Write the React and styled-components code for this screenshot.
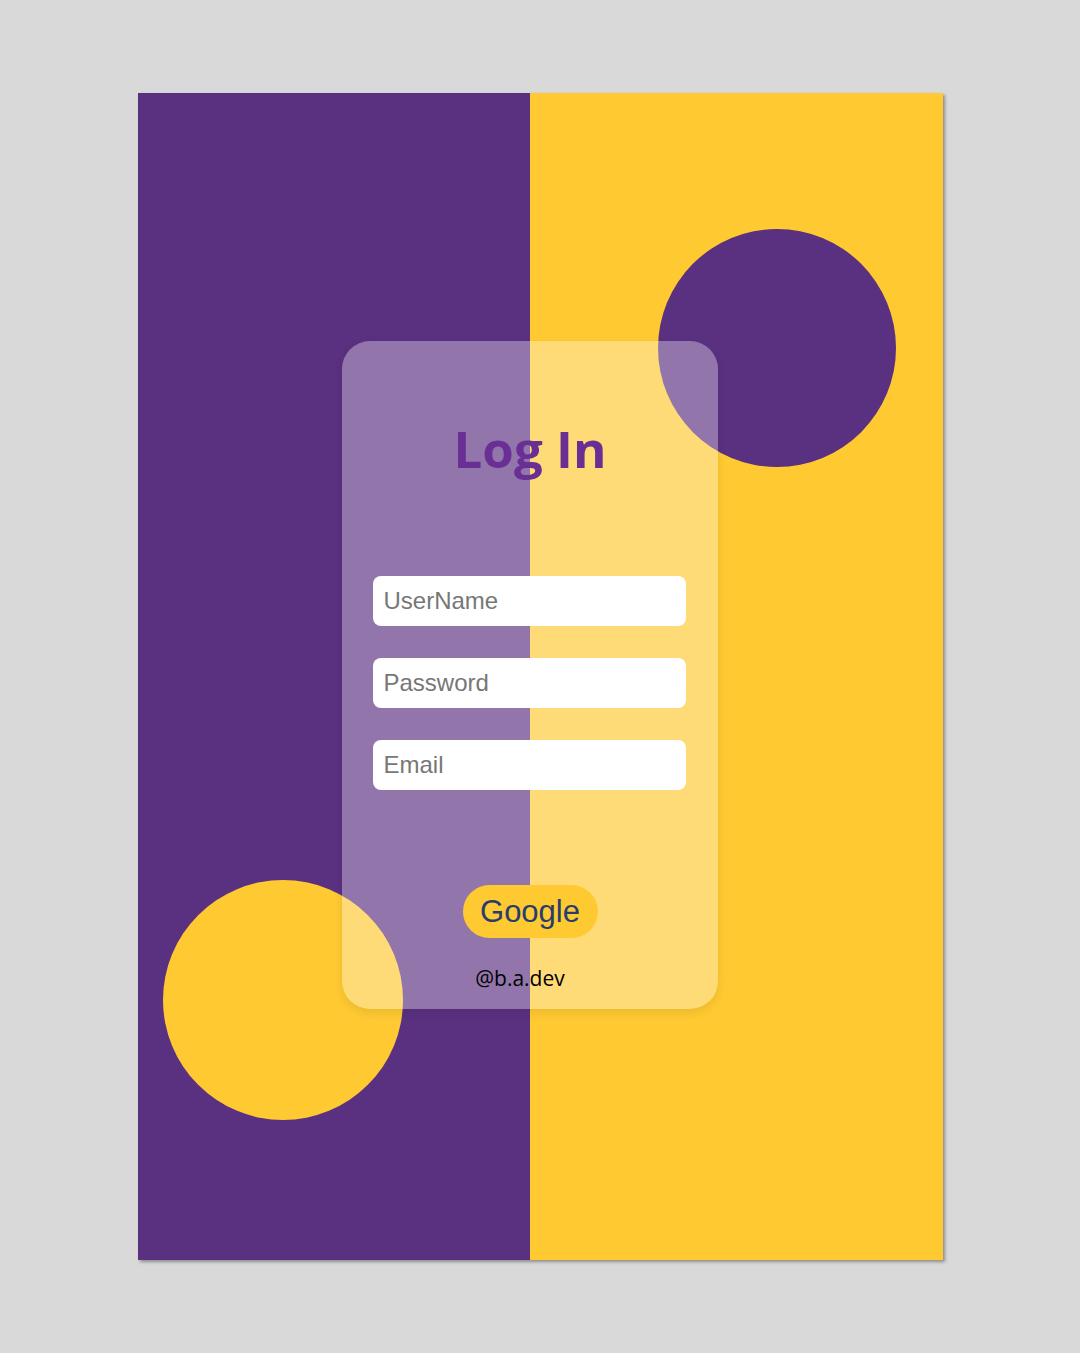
import React from 'react';
import styled, { createGlobalStyle } from 'styled-components';

const GlobalStyle = createGlobalStyle`
    html, body {
        margin: 0;
        padding: 0;
        background: #d9d9d9;
    }
`;

const Page = styled.div`
    width: 1080px;
    height: 1353px;
    padding: 93px 0 0 138px;
    box-sizing: border-box;
`;

const Poster = styled.div`
    position: relative;
    display: flex;
    width: 805px;
    height: 1167px;
    overflow: hidden;
    box-shadow: 2px 2px 3px rgba(0, 0, 0, 0.35);
`;

const Half = styled.div`
    flex: ${(p) => (p.$grow ? 1 : '0 0 392px')};
    background: ${(p) => p.$color};
`;

// 원 장식 (포스터 위 자유 배치)
const Circle = styled.div`
    position: absolute;
    left: ${(p) => p.$left}px;
    top: ${(p) => p.$top}px;
    width: ${(p) => p.$size}px;
    height: ${(p) => p.$size}px;
    border-radius: 50%;
    background: ${(p) => p.$color};
`;

const Card = styled.form`
    position: absolute;
    left: 204px;
    top: 248px;
    width: 376px;
    height: 668px;
    box-sizing: border-box;
    padding-top: 81px;
    display: flex;
    flex-direction: column;
    align-items: center;
    border-radius: 28px;
    background: rgba(255, 255, 255, 0.34);
    box-shadow: 0 4px 10px rgba(0, 0, 0, 0.08);
`;

const Title = styled.h1`
    margin: 0 0 102px;
    font-family: "Open Sans", sans-serif;
    font-weight: 700;
    font-size: 51px;
    line-height: 52px;
    color: #6a2f95;
`;

const Fields = styled.div`
    display: flex;
    flex-direction: column;
    gap: 32px;
    padding-right: 2px;
`;

const Input = styled.input`
    width: 313px;
    height: 50px;
    box-sizing: border-box;
    border: none;
    border-radius: 8px;
    background: #fff;
    padding: 0 11px;
    font-family: "Liberation Sans", Arial, sans-serif;
    font-size: 24px;
    outline: none;
    &::placeholder {
        color: #777;
    }
`;

const GoogleButton = styled.button`
    margin-top: 95px;
    width: 135px;
    height: 53px;
    border: none;
    border-radius: 27px;
    background: #fec931;
    color: #273d6e;
    font-family: "Liberation Sans", Arial, sans-serif;
    font-size: 31px;
    padding: 0;
    cursor: pointer;
`;

const Handle = styled.p`
    margin: 28px 0 0;
    padding-right: 20px;
    font-family: "Open Sans", sans-serif;
    font-size: 21px;
    line-height: 24px;
    color: #000;
`;

const App = () => {
    return (
        <>
            <GlobalStyle />
            <Page>
                <Poster>
                    <Half $color="#5a3080" />
                    <Half $color="#fec931" $grow />
                    <Circle $left={520} $top={136} $size={238} $color="#5a3080" />
                    <Circle $left={25} $top={787} $size={240} $color="#fec931" />
                    <Card onSubmit={(e) => e.preventDefault()}>
                        <Title>Log In</Title>
                        <Fields>
                            <Input type="text" placeholder="UserName" />
                            <Input type="password" placeholder="Password" />
                            <Input type="email" placeholder="Email" />
                        </Fields>
                        <GoogleButton type="button">Google</GoogleButton>
                        <Handle>@b.a.dev</Handle>
                    </Card>
                </Poster>
            </Page>
        </>
    );
};

export default App;
